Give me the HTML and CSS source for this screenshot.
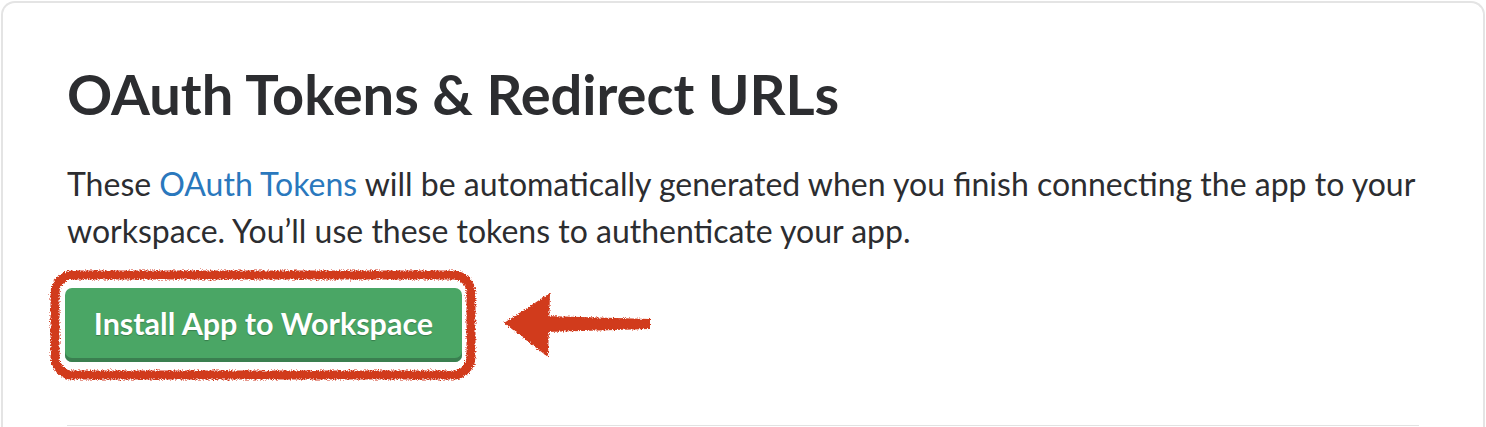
FILE: index.html
```html
<!DOCTYPE html>
<html>
<head>
<meta charset="utf-8">
<link rel="stylesheet" href="styles.css">
</head>
<body>
<div class="card">
  <h1 class="title">OAuth Tokens &amp; Redirect URLs</h1>
  <p class="desc">These <a class="link" href="#">OAuth Tokens</a> will be automatically generated when you finish connecting the app to your workspace. You’ll use these tokens to authenticate your app.</p>
  <div class="action-row">
    <div class="btn-wrap">
      <button class="btn">Install App to Workspace</button>
      <svg class="scribble" width="430" height="114" viewBox="0 0 430 114">
        <defs>
          <filter id="rough" x="-5%" y="-10%" width="110%" height="120%">
            <feTurbulence type="fractalNoise" baseFrequency="0.8" numOctaves="2" seed="3" result="n"/>
            <feDisplacementMap in="SourceGraphic" in2="n" scale="5" xChannelSelector="R" yChannelSelector="G"/>
          </filter>
        </defs>
        <rect x="7" y="7" width="416" height="100" rx="18" ry="18" fill="none" stroke="#d13b1f" stroke-width="9" filter="url(#rough)"/>
      </svg>
    </div>
    <svg class="arrow" width="152" height="74" viewBox="0 0 152 74">
      <defs>
        <filter id="rough2" x="-10%" y="-10%" width="120%" height="120%">
          <feTurbulence type="fractalNoise" baseFrequency="0.8" numOctaves="2" seed="7" result="n"/>
          <feDisplacementMap in="SourceGraphic" in2="n" scale="4" xChannelSelector="R" yChannelSelector="G"/>
        </filter>
      </defs>
      <g filter="url(#rough2)" fill="#d13b1f">
        <polygon points="2,35 48,5 46,69"/>
        <polygon points="44,28 148,31 148,41 44,44"/>
      </g>
    </svg>
  </div>
  <div class="divider"></div>
</div>
</body>
</html>
```

FILE: styles.css
```css
html, body {
  margin: 0;
  padding: 0;
  background: #ffffff;
}
body {
  font-family: Lato, "Open Sans", sans-serif;
  color: #2c2d30;
}
.card {
  margin: 1px 1px 0 1px;
  border: 2px solid #e4e4e4;
  border-bottom: none;
  border-radius: 14px 14px 0 0;
  padding: 58px 64px 0 64px;
  height: 600px;
  box-sizing: border-box;
}
.title {
  margin: 0;
  font-size: 56px;
  line-height: 66px;
  font-weight: 700;
  color: #2c2d30;
}
.desc {
  margin: 33px 0 0 0;
  font-size: 32px;
  line-height: 47px;
  color: #2c2d30;
}
.link {
  color: #2a78bd;
  text-decoration: none;
}
.action-row {
  display: flex;
  align-items: flex-start;
  gap: 40px;
  margin-top: 34px;
}
.btn-wrap {
  position: relative;
  margin-left: -2px;
}
.btn {
  display: block;
  width: 397px;
  height: 74px;
  border: none;
  border-radius: 7px;
  background: #4aa665;
  box-shadow: inset 0 -4px 0 #3a7f50;
  padding: 0 0 4px 0;
  font-family: Lato, sans-serif;
  font-weight: 700;
  font-size: 30.5px;
  color: #ffffff;
  text-shadow: 0 1px 1px rgba(0,0,0,0.25);
}
.scribble {
  position: absolute;
  left: -17px;
  top: -20px;
}
.arrow {
  display: block;
}
.divider {
  margin-top: 63px;
  border-top: 1px solid #e2e2e2;
}
```
